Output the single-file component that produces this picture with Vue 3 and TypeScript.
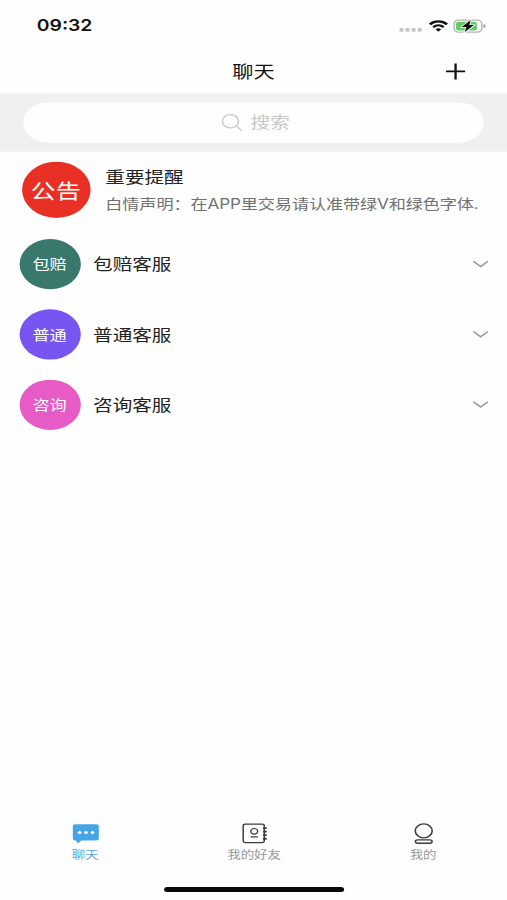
<script setup lang="ts">
interface Group {
  badge: string
  name: string
  tone: string
}

const groups: Group[] = [
  { badge: '包赔', name: '包赔客服', tone: 'green' },
  { badge: '普通', name: '普通客服', tone: 'violet' },
  { badge: '咨询', name: '咨询客服', tone: 'pink' },
]
</script>

<template>
  <div class="screen">
    <div class="page">
      <div class="status">
        <span class="time">09:32</span>
        <div class="indicators">
          <svg class="dots" width="20" height="4" viewBox="0 0 20 4">
            <rect v-for="i in 4" :key="i" :x="(i - 1) * 5" y="0" width="3.4" height="3.6" rx="1" fill="#c6c6c6" />
          </svg>
          <svg class="wifi" width="16" height="12" viewBox="0 0 16 12">
            <path d="M1 4.2C5 .4 11 .4 15 4.2" fill="none" stroke="#111" stroke-width="2.3" />
            <path d="M3.7 7C6.3 4.7 9.7 4.7 12.3 7" fill="none" stroke="#111" stroke-width="2.1" />
            <path d="M5.7 9.1Q8 7.3 10.3 9.1L8 11.6Z" fill="#111" />
          </svg>
          <svg class="battery" width="28" height="14" viewBox="0 0 28 14">
            <rect x=".8" y="1" width="22.6" height="12" rx="3.8" fill="#fff" stroke="#b7b7b7" stroke-width="1.3" />
            <rect x="2.4" y="2.6" width="17" height="8.8" rx="2" fill="#61cb66" />
            <path d="M24.8 5V9Q26.6 8.4 26.6 7T24.8 5Z" fill="#999" />
            <path d="M14.4 .8L7 8H10.8L9.4 13.2L17 6H13.2Z" fill="#111" stroke="#fff" stroke-width="1.4" paint-order="stroke" />
          </svg>
        </div>
      </div>

      <header class="nav">
        <h1>聊天</h1>
        <svg class="plus" width="16" height="17" viewBox="0 0 16 17">
          <path d="M0 8.1H16M8 0V16.2" stroke="#111" stroke-width="1.9" />
        </svg>
      </header>

      <div class="search-bar">
        <div class="search">
          <svg width="17" height="18" viewBox="0 0 17 18" fill="none" stroke="#cbcbcb" stroke-width="1.3">
            <circle cx="7.2" cy="7.7" r="6.6" />
            <path d="M11.9 12.5L16.3 17" />
          </svg>
          <span>搜索</span>
        </div>
      </div>

      <main>
        <section class="notice">
          <div class="notice-badge"><span>公告</span></div>
          <div class="notice-body">
            <div class="notice-title">重要提醒</div>
            <div class="notice-text">白情声明：在APP里交易请认准带绿V和绿色字体.</div>
          </div>
        </section>
        <section v-for="group in groups" :key="group.name" class="group">
          <div class="badge" :class="group.tone"><span>{{ group.badge }}</span></div>
          <span class="name">{{ group.name }}</span>
          <svg class="chevron" width="13" height="8" viewBox="0 0 13 8">
            <path d="M.5 1L6.5 6.3L12.5 1" fill="none" stroke="#999" stroke-width="1.4" />
          </svg>
        </section>
      </main>

      <nav class="tabs">
        <div class="tab active">
          <svg width="22" height="22" viewBox="0 0 22 22">
            <path d="M2.5 1.5H19.5Q21.7 1.5 21.7 3.7V15.6Q21.7 17.8 19.5 17.8H7.6L4.3 20.8L3.2 17.8H2.5Q.4 17.8 .4 15.6V3.7Q.4 1.5 2.5 1.5Z" fill="#45a5e4" />
            <g fill="#fff">
              <circle cx="6" cy="9.7" r="1.5" />
              <circle cx="11.2" cy="9.7" r="1.5" />
              <circle cx="16.5" cy="9.7" r="1.5" />
            </g>
          </svg>
          <span>聊天</span>
        </div>
        <div class="tab">
          <svg width="22" height="22" viewBox="0 0 22 22" fill="none" stroke="#3c3c3c" stroke-width="1.2">
            <rect x="1.6" y="1.4" width="17.2" height="18.4" rx="1.8" />
            <circle cx="10.6" cy="8.6" r="2.8" />
            <path d="M7.7 14.2H13.5" />
            <path d="M17.8 5.5H20.8M17.8 9H20.8M17.8 12.5H20.8M17.8 16H20.8" stroke-width="1.8" />
          </svg>
          <span>我的好友</span>
        </div>
        <div class="tab">
          <svg width="22" height="22" viewBox="0 0 22 22" fill="none" stroke="#3c3c3c" stroke-width="1.3">
            <circle cx="11" cy="8.2" r="6.9" />
            <rect x="4.2" y="17.1" width="13.6" height="3.4" rx="1.7" />
          </svg>
          <span>我的</span>
        </div>
      </nav>
      <div class="home"><i></i></div>
    </div>
  </div>
</template>

<style>
body {
  margin: 0;
  background: #fefefe;
}
</style>

<style scoped>
.screen {
  width: 507px;
  height: 900px;
  overflow: hidden;
  background: #fefefe;
}

.page {
  display: flex;
  flex-direction: column;
  width: 414px;
  height: 896px;
  transform: scale(1.22464, 1.00446);
  transform-origin: 0 0;
  font-family: Inter, "Noto Sans CJK SC", sans-serif;
  color: #222;
}

.status {
  box-sizing: border-box;
  display: flex;
  justify-content: space-between;
  height: 49px;
  padding: 15px 16.5px 0 30px;
}

.time {
  font-size: 15.8px;
  line-height: 22px;
  font-weight: 600;
  color: #111;
}

.indicators {
  display: flex;
  height: 22px;
  align-items: center;
}

.dots {
  margin: 7px 3.5px 0 0;
}

.wifi {
  margin-right: 4px;
}

.nav {
  display: grid;
  grid-template-columns: 1fr auto 1fr;
  align-items: center;
  height: 44px;
}

.nav h1 {
  grid-column: 2;
  margin: 0;
  padding-top: 1px;
  font-size: 17.3px;
  line-height: 24px;
  font-weight: 400;
  color: #111;
}

.plus {
  justify-self: end;
  margin-right: 34px;
}

.search-bar {
  box-sizing: border-box;
  height: 58px;
  padding: 8.5px 19px 9.5px 19.2px;
  background: #f0f0f0;
}

.search {
  box-sizing: border-box;
  display: flex;
  align-items: center;
  justify-content: center;
  gap: 7px;
  height: 40px;
  padding-left: 3px;
  border-radius: 20px;
  background: #fefefe;
  font-size: 16px;
  color: #c7c7c7;
}

.search span {
  padding-bottom: 3px;
}

main {
  flex: 1;
}

.notice {
  box-sizing: border-box;
  display: flex;
  gap: 12.5px;
  height: 77px;
  padding: 10px 0 0 17.5px;
}

.notice-badge {
  display: grid;
  place-items: center;
  width: 56px;
  height: 56px;
  flex: none;
  border-radius: 50%;
  background: #e83124;
  color: #fff;
  font-size: 20.5px;
}

.notice-badge span {
  padding-bottom: 1px;
}

.notice-title {
  margin-top: 3px;
  font-size: 16px;
  line-height: 24px;
}

.notice-text {
  margin-top: 4px;
  font-size: 14px;
  line-height: 22px;
  letter-spacing: -0.1px;
  color: #717171;
  white-space: nowrap;
}

.group {
  box-sizing: border-box;
  display: flex;
  align-items: center;
  height: 70px;
  padding: 0 15.5px;
}

.badge {
  display: grid;
  place-items: center;
  width: 50px;
  height: 50px;
  border-radius: 50%;
  color: #fff;
  font-size: 14px;
}

.badge span {
  padding-bottom: 3px;
}

.green {
  background: #38786d;
}

.violet {
  background: #7854f0;
}

.pink {
  background: #e65bc5;
}

.name {
  flex: 1;
  margin-left: 10.5px;
  padding-bottom: 3px;
  font-size: 16px;
}

.tabs {
  display: grid;
  grid-template-columns: repeat(3, 1fr);
  height: 62px;
}

.tab {
  display: flex;
  flex-direction: column;
  align-items: center;
  padding-left: 1px;
  font-size: 11px;
  line-height: 16px;
  color: #999;
}

.tab span {
  margin-top: 2px;
}

.active {
  color: #5ba9de;
}

.home {
  display: flex;
  justify-content: center;
  height: 15px;
}

.home i {
  width: 147px;
  height: 5px;
  margin-top: 2px;
  border-radius: 3px;
  background: #080808;
}
</style>
